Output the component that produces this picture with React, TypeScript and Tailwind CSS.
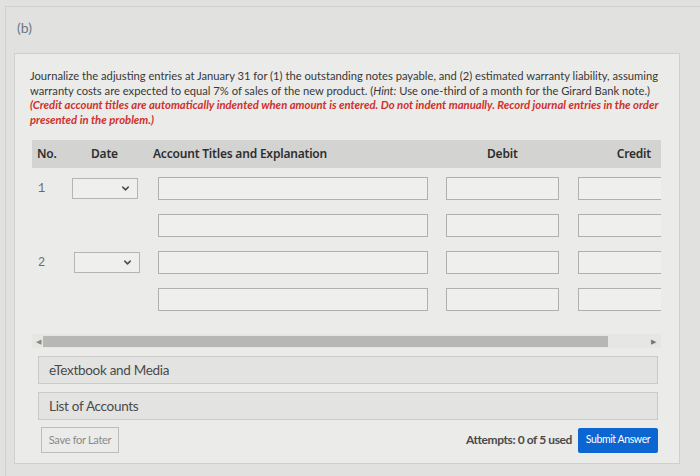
import { ChevronDown } from 'lucide-react';

const lato = { fontFamily: 'Lato, "Open Sans", sans-serif' };

function DateSelect({ offset = '' }: { offset?: string }) {
  return (
    <div
      className={`h-[21px] w-[66px] border border-[#b4b4b2] bg-[#efefed] flex items-center justify-end pr-[6px] ${offset}`}
    >
      <ChevronDown size={11} strokeWidth={3.2} color="#4a4a4a" />
    </div>
  );
}

function Field({ width }: { width: string }) {
  return <div className={`h-[23px] ${width} shrink-0 border border-[#b0b0ae] bg-[#efefed]`} />;
}

function EntryRow({ no, offset }: { no?: string; offset?: string }) {
  return (
    <div className="flex items-center h-[23px]">
      <div className="w-[40px] shrink-0 pl-[6px] text-[12px] text-[#6a6a6a]" style={{ fontFamily: '"Liberation Mono", monospace' }}>
        {no}
      </div>
      <div className="w-[86px] shrink-0">{no && <DateSelect offset={offset} />}</div>
      <div className="w-[288px] shrink-0">
        <Field width="w-[270px]" />
      </div>
      <div className="w-[132px] shrink-0">
        <Field width="w-[113px]" />
      </div>
      <Field width="w-[113px]" />
    </div>
  );
}

export default function App() {
  return (
    <div className="w-[700px] h-[476px] overflow-hidden bg-[#e1e1df] pt-[6px] pl-[5px]" style={lato}>
      <div className="h-full border-l border-t border-[#d0d0ce]">
        <div className="h-[46px] pl-[11px] pt-[10px] text-[14px] text-[#6c7888]">(b)</div>

        <div className="ml-[8px] w-[666px] h-[411px] border border-[#cfcfcd] bg-[#ebebe9]">
          <div className="pl-[15px] pt-[15px] text-[11.2px] leading-[14.5px] text-[#383838]">
            <div className="whitespace-nowrap">
              Journalize the adjusting entries at January 31 for (1) the outstanding notes payable, and (2) estimated warranty liability, assuming
            </div>
            <div className="whitespace-nowrap">
              warranty costs are expected to equal 7% of sales of the new product. (<i>Hint:</i> Use one-third of a month for the Girard Bank note.)
            </div>
            <div className="whitespace-nowrap font-bold italic text-[#d0302c] text-[11.3px]">
              (Credit account titles are automatically indented when amount is entered. Do not indent manually. Record journal entries in the order
            </div>
            <div className="whitespace-nowrap font-bold italic text-[#d0302c] text-[11.3px]">presented in the problem.)</div>
          </div>

          <div className="ml-[17px] mt-[13px] w-[629px] overflow-hidden">
            <div
              className="h-[28px] bg-[#d3d3d1] flex items-center text-[12px] font-semibold text-[#2e2e2e] tracking-[-0.2px]"
              style={{ fontFamily: '"Noto Sans", "Open Sans", sans-serif' }}
            >
              <span className="w-[59px] pl-[5px]">No.</span>
              <span className="w-[62px]">Date</span>
              <span className="w-[334px]">Account Titles and Explanation</span>
              <span>Debit</span>
              <span className="ml-auto pr-[10px]">Credit</span>
            </div>

            <div className="pt-[9px] flex flex-col gap-[14px]">
              <EntryRow no="1" />
              <EntryRow />
              <EntryRow no="2" offset="ml-[2px]" />
              <EntryRow />
            </div>

            <div className="mt-[23px] h-[14px] flex items-center bg-[#e6e6e4]">
              <span className="w-[11px] pl-[4px] text-[7px] text-[#888]">◀</span>
              <div className="h-[11px] w-[565px] bg-[#b7b7b5]" />
              <span className="ml-auto pr-[5px] text-[7px] text-[#777]">▶</span>
            </div>
          </div>

          <div className="ml-[23px] w-[620px] mt-[8px] flex flex-col gap-[8px]">
            <div className="h-[28px] border border-[#cacac8] bg-[#e3e3e1] flex items-center pl-[10px] text-[13.5px] text-[#4a4a4a] tracking-[-0.3px]">
              eTextbook and Media
            </div>
            <div className="h-[28px] border border-[#cacac8] bg-[#e3e3e1] flex items-center pl-[10px] text-[13.5px] text-[#4a4a4a] tracking-[-0.3px]">
              List of Accounts
            </div>
          </div>

          <div className="ml-[26px] w-[617px] mt-[7px] flex items-center">
            <div className="h-[26px] w-[78px] border border-[#bdbdbb] flex items-center justify-center text-[11px] text-[#8a8a8a] tracking-[-0.3px]">
              Save for Later
            </div>
            <span className="ml-auto mr-[6px] text-[12px] font-bold text-[#4a4a4a] tracking-[-0.4px]">Attempts: 0 of 5 used</span>
            <div className="h-[25px] w-[80px] rounded-[2px] bg-[#0b66d1] flex items-center justify-center text-[10.5px] text-white tracking-[-0.4px]">
              Submit Answer
            </div>
          </div>
        </div>
      </div>
    </div>
  );
}
